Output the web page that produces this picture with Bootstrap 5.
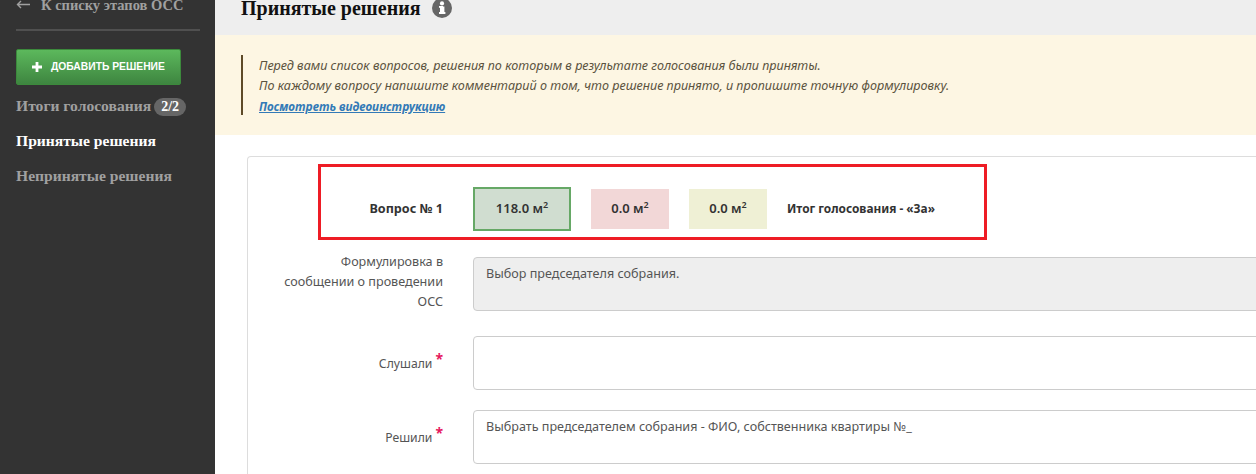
<!DOCTYPE html>
<html lang="ru">
<head>
<meta charset="utf-8">
<title>Принятые решения</title>
<link href="https://cdn.jsdelivr.net/npm/bootstrap@5.3.0/dist/css/bootstrap.min.css" rel="stylesheet">
<style>
html,body{height:474px;overflow:hidden;}
body{font-family:"Noto Sans","Open Sans",sans-serif;font-size:12.6px;color:#444;background:#fff;}
.shell{height:474px;overflow:hidden;}
.side{width:215px;flex:none;background:#333;padding:0 16px;font-family:"Liberation Serif",serif;font-weight:700;font-size:15.6px;color:#a0a0a0;}
.backlink{display:flex;align-items:flex-start;width:184px;height:31px;gap:11px;font-size:14.5px;line-height:10px;border-bottom:2px solid #505050;}
.addbtn{width:165px;height:36px;margin-top:18px;border:1px solid #3c8a3c;border-radius:2px;background:linear-gradient(#5cb85c,#3e8540);color:#fff;font-family:"Liberation Sans",sans-serif;font-size:10.3px;font-weight:700;display:flex;align-items:center;padding:0 0 0 15px;gap:9px;}
.sideitem{height:35px;display:flex;align-items:center;gap:3px;line-height:1;}
.sideitem.first{margin-top:3px;}
.sideitem.on{color:#fff;}
.cnt{background:#666;color:#fff;border-radius:9px;padding:2px 7px;font-size:14px;line-height:14px;margin-top:2px;}
.mainpane{flex:1;min-width:0;}
.headbar{height:35px;background:#eee;padding-left:26px;display:flex;align-items:flex-start;gap:11px;}
.headbar h1{font-family:"Liberation Serif",serif;font-weight:700;font-size:20px;line-height:16px;color:#111;margin:0;}
.headbar svg{margin-top:-2px;}
.hint{background:#fdf6e3;height:100px;padding:20px 26px 0;}
.hintbody{border-left:2px solid #5e4a28;height:60px;padding:1px 0 0 16px;font-style:italic;line-height:20px;color:#5b5340;}
.hintbody a{color:#337ab7;font-weight:700;font-size:11.8px;}
.formcard{margin:21px -40px 0 32px;border:1px solid #ddd;border-bottom:0;border-radius:4px 4px 0 0;height:318px;position:relative;}
.qrow{display:flex;align-items:center;height:46px;margin-top:29px;color:#333;font-weight:700;}
.lbl{width:195px;flex:none;text-align:right;}
.tile{display:flex;align-items:center;justify-content:center;height:40px;width:78px;margin-right:20px;font-size:13px;font-weight:600;}
.tile sup{font-size:9px;}
.tile.yes{width:98px;height:44px;margin-left:30px;background:#d0ddd0;border:2px solid #66a866;margin-right:20px;}
.tile.no{background:#f2d7d7;}
.tile.abs{background:#eff0d5;}
.verdict{font-size:11.85px;}
.frow{display:flex;margin-top:20px;}
.frow.gapa{margin-top:25px;}
.frow.gapb{margin-top:24px;}
.frow .lbl{font-size:12.2px;line-height:20px;color:#555;}
.frow .lbl.longlbl{font-size:12.6px;padding-left:30px;margin-top:-5px;}
.boxf{width:800px;margin-left:30px;height:54px;border:1px solid #ccc;border-radius:4px;padding:6px 12px;line-height:20px;color:#555;}
.boxf.off{background:#eee;}
.req{color:#e6195e;font-size:14px;font-weight:700;vertical-align:4px;margin-left:3px;line-height:1;}
.redbox{position:absolute;left:70px;top:7px;width:669px;height:76px;border:3px solid #ee1c25;pointer-events:none;}
</style>
</head>
<body>
<div class="d-flex shell">
  <aside class="side">
    <div class="backlink"><svg width="14" height="9" viewBox="0 0 14 9" fill="none" stroke="#a0a0a0" stroke-width="1.4"><path d="M14 4.5H1.5M5 1 1.5 4.5 5 8"/></svg><span>К списку этапов ОСС</span></div>
    <div class="addbtn"><svg width="10" height="10" viewBox="0 0 10 10" fill="#fff"><path d="M3.6 0h2.8v3.6H10v2.8H6.4V10H3.6V6.4H0V3.6h3.6z"/></svg>ДОБАВИТЬ РЕШЕНИЕ</div>
    <div class="sideitem first">Итоги голосования <span class="cnt">2/2</span></div>
    <div class="sideitem on">Принятые решения</div>
    <div class="sideitem">Непринятые решения</div>
  </aside>
  <main class="mainpane">
    <div class="headbar"><h1>Принятые решения</h1><svg width="20" height="20" viewBox="0 0 20 20"><circle cx="10" cy="10" r="10" fill="#666"/><rect x="8" y="8.5" width="4.4" height="7" fill="#fff"/><rect x="7" y="14" width="6.4" height="2" fill="#fff"/><rect x="7" y="8" width="4" height="1.8" fill="#fff"/><circle cx="10" cy="5.4" r="2.1" fill="#fff"/></svg></div>
    <div class="hint"><div class="hintbody">Перед вами список вопросов, решения по которым в результате голосования были приняты.<br>По каждому вопросу напишите комментарий о том, что решение принято, и пропишите точную формулировку.<br><a href="#">Посмотреть видеоинструкцию</a></div></div>
    <div class="formcard">
      <div class="redbox"></div>
      <div class="qrow"><div class="lbl">Вопрос № 1</div><div class="tile yes">118.0 м<sup>2</sup></div><div class="tile no">0.0 м<sup>2</sup></div><div class="tile abs">0.0 м<sup>2</sup></div><div class="verdict">Итог голосования - «За»</div></div>
      <div class="frow gapa"><div class="lbl longlbl">Формулировка в сообщении о проведении ОСС</div><div class="boxf off">Выбор председателя собрания.</div></div>
      <div class="frow gapb"><div class="lbl pt-3">Слушали<span class="req">*</span></div><div class="boxf"></div></div>
      <div class="frow"><div class="lbl pt-3">Решили<span class="req">*</span></div><div class="boxf">Выбрать председателем собрания - ФИО, собственника квартиры №_</div></div>
    </div>
  </main>
</div>
</body>
</html>
